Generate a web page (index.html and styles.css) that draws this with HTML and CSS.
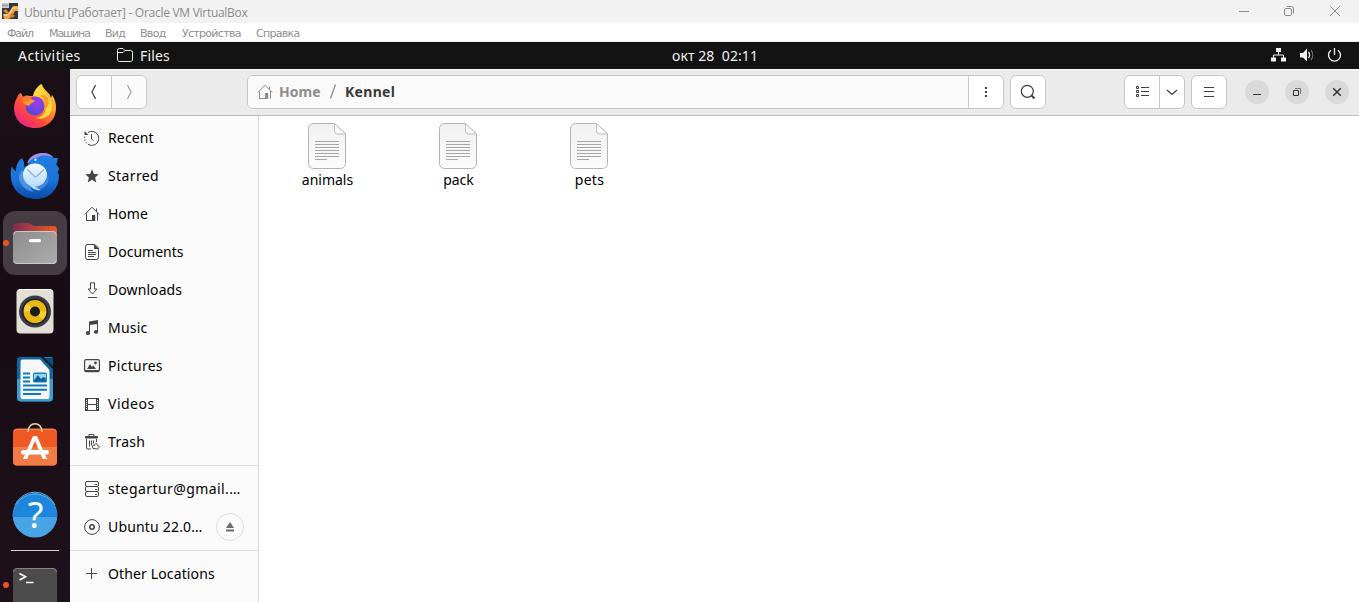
FILE: index.html
```html
<!DOCTYPE html>
<html lang="ru">
<head>
<meta charset="utf-8">
<title>Ubuntu [Работает] - Oracle VM VirtualBox</title>
<link rel="stylesheet" href="styles.css">
</head>
<body>
<svg class="defs" width="0" height="0">
  <defs>
    <linearGradient id="ffBody" x1="1" y1="0" x2=".2" y2="1"><stop offset="0" stop-color="#fff04a"/><stop offset=".4" stop-color="#ff9a2a"/><stop offset=".7" stop-color="#ff4a3c"/><stop offset="1" stop-color="#e8208a"/></linearGradient>
    <radialGradient id="ffCore" cx=".6" cy=".3" r=".8"><stop offset="0" stop-color="#a03cf0"/><stop offset="1" stop-color="#4a4ad0"/></radialGradient>
    <linearGradient id="ffHead" x1="0" y1="0" x2="1" y2="1"><stop offset="0" stop-color="#ff5a30"/><stop offset="1" stop-color="#ffb52e"/></linearGradient>
    <linearGradient id="tb" x1="0" y1="0" x2="0" y2="1"><stop offset="0" stop-color="#2080e0"/><stop offset=".6" stop-color="#1a72d8"/><stop offset="1" stop-color="#0c4aa4"/></linearGradient>
    <linearGradient id="tbMail" x1="0" y1="0" x2="0" y2="1"><stop offset="0" stop-color="#f4faff"/><stop offset="1" stop-color="#b4dcfc"/></linearGradient>
    <linearGradient id="flBack" x1="0" y1="0" x2="1" y2="0"><stop offset="0" stop-color="#7c2b56"/><stop offset="1" stop-color="#f05a24"/></linearGradient>
    <linearGradient id="flFront" x1="0" y1="0" x2="1" y2="1"><stop offset="0" stop-color="#8c8c8c"/><stop offset="1" stop-color="#adadad"/></linearGradient>
    <linearGradient id="paper" x1="0" y1="0" x2="0" y2="1"><stop offset="0" stop-color="#f1f1f1"/><stop offset="1" stop-color="#fbfbfb"/></linearGradient>
    <symbol id="home" viewBox="0 0 16 16"><path d="M.8 8.500 8 1.200l7.200 7.300M2.500 7.500v7h3M13.500 7v7.500H13M12.500 2.500v3" fill="none" stroke="currentColor"/><path d="M2.500 14.500h8" stroke="currentColor"/><path d="M8 9h3.200v6H8z" fill="currentColor"/></symbol>
    <symbol id="file" viewBox="0 0 38 46"><path d="M5.500.5h21L37.500 11v29.500a5 5 0 0 1-5 5h-27a5 5 0 0 1-5-5v-35a5 5 0 0 1 5-5z" fill="url(#paper)" stroke="#b4b4b4"/><path d="M26.500.5V8a3 3 0 0 0 3 3h8z" fill="#fafafa" stroke="#bdbdbd"/><path d="M7 18.500h24M7 21.500h24M7 24.500h24M7 27.500h24M7 30.500h24M7 33.500h24M7 36.500h12" stroke="#a6a6a6"/></symbol>
  </defs>
</svg>

<header class="vm-title">
  <svg class="vm-logo" width="16" height="16" viewBox="0 0 16 16"><rect width="16" height="16" fill="#343843"/><path d="M1 11h4l2 1 2-5 2-4h5v5h-3l-3 5-3 3H2z" fill="#f0a040"/><path d="M2 12h4l5-7h4" stroke="#ffd590" stroke-width="1.500" fill="none"/><path d="M4 6l3 4-2 1-4-3z" fill="#e8862c"/><path d="M10 10l3 3-3 2-2-2z" fill="#e07a20"/><path d="M0 0h7v5H0z" fill="#c9ced5"/><path d="M1 1.500v2M3 1.500v2M5 1.500v2" stroke="#687080"/></svg>
  <span class="vm-name">Ubuntu [Работает] - Oracle VM VirtualBox</span>
  <svg class="vm-controls" width="110" height="20" viewBox="0 0 110 20" fill="none" stroke="#8c8c8c"><path d="M4 10.500h10"/><rect x="49.500" y="7.500" width="7" height="7" rx="1.500"/><path d="M51.500 5.500h5a2 2 0 0 1 2 2v5"/><path d="M95 5l10 10M105 5 95 15"/></svg>
</header>
<nav class="vm-menu">
  <span class="m1">Файл</span><span class="m2">Машина</span><span class="m3">Вид</span><span class="m4">Ввод</span><span class="m5">Устройства</span><span class="m6">Справка</span>
</nav>

<div class="topbar">
  <span class="activities">Activities</span>
  <svg class="tb-folder" width="16" height="14" viewBox="0 0 16 14" fill="none" stroke="#eee"><path d="M.5 11V2.500A2 2 0 0 1 2.500.5H6L8 2.500h5.500a2 2 0 0 1 2 2V11a2 2 0 0 1-2 2.500h-11a2 2 0 0 1-2-2.500zM.5 4.500H6l2-2"/></svg>
  <span class="tb-app">Files</span>
  <span class="clock">окт 28&nbsp; 02:11</span>
  <svg class="tray" width="72" height="16" viewBox="0 0 72 16"><path d="M5 0h5v4H5zM0 9.500h5v4H0zM10 9.500h5v4h-5z" fill="#f2f2f2"/><path d="M7.500 4v3M2.500 10V7h10v3" fill="none" stroke="#f2f2f2"/><path d="M29 5h3l4-4.500v13L32 9.500h-3z" fill="#f2f2f2"/><path d="M37.500 4a5 5 0 0 1 0 6" fill="none" stroke="#f2f2f2" stroke-width="1.300"/><path d="M40 2a8 8 0 0 1 0 10" fill="none" stroke="#777" stroke-width="1.200"/><path d="M60 2.300a6 6 0 1 0 7 0M63.500 0v7" fill="none" stroke="#f2f2f2" stroke-width="1.300"/></svg>
</div>

<main class="desktop">
  <aside class="dock">
    <svg class="tile" viewBox="0 0 64 64"><path d="M32 53C19 53 11 44 11 33c0-5 2-9 4-12 0-1 2-3 3-3l2 4c2-1 4-2 6-1h4c1-5 4-9 9-12 1 5 5 7 8 11l1 3 1-3c3 4 4 8 4 13 0 12-9 20-21 20z" fill="url(#ffBody)"/><path d="M38 9c-4 3-7 7-8 12 6 0 12 3 13 9 1 7-4 13-11 13 9 3 18-3 17-13-1-9-9-11-11-21z" fill="#ffd83c"/><circle cx="32" cy="31" r="9.500" fill="url(#ffCore)"/><path d="M17 23c5-3 9-1 13 2 2 0 2 1 1 2-3 1-4 2-5 4-4-1-7-3-9-8z" fill="url(#ffHead)"/><path d="M36 21c7 1 8 9 5 14 4-2 6-8 4-12-2-3-5-4-9-2z" fill="#ff9d2a"/></svg>
    <svg class="tile" viewBox="0 0 64 64"><path d="M9 23c1 3 2 4 4 5 0-6 2-10 6-13 1 3 3 4 2 9l4-2C26 15 32 10 40 10c6 0 9 3 11 5h4c-1 3 0 4-2 6 2 2 3 4 3 6-2 1-1 3 0 5 0 14-9 24-23 24C19 56 9 47 8 35c-1-5 0-9 1-12z" fill="url(#tb)"/><path d="M24 20.500c2-6.500 8-10.500 16-10.500 5 0 8 2 10 4-6-2-11-2-15 0l-3 3c-3 0-5 2-8 3.500z" fill="#a58fe8"/><path d="M25 20c3-4 6-5 10-5 5 0 8 4 8 9l-9-3z" fill="#1f7ce0"/><path d="M19 27c-3 4-4 8-2 12 3 6 8 9 14 10-3-2-4-4-3-6z" fill="#5c9cec" opacity=".8"/><ellipse cx="32" cy="32" rx="12" ry="11.500" fill="url(#tbMail)"/><path d="M24.500 26.500 31 33q1.500 1.500 3 0l7-6.500" fill="none" stroke="#8fabc8" stroke-width="1.200"/><path d="M26 41c3 5 7 7 12 6-3-1-5-3-5-5z" fill="#b9dcfb"/><path d="M40 41c4-2 6-7 4-12 3 5 2 12-4 16-4 2-8 0-8-2 3 1 6 0 8-2z" fill="#6f9fe8" opacity=".6"/><circle cx="32.500" cy="16.700" r="1.200" fill="#dcecff"/></svg>
    <div class="tile active"><span class="run-dot"></span><svg width="64" height="64" viewBox="0 0 64 64"><path d="M10 40V16a4 4 0 0 1 4-4h11c3 0 4 3 7 3h18a4 4 0 0 1 4 4v21z" fill="url(#flBack)"/><rect x="10" y="20" width="44" height="33" rx="4" fill="url(#flFront)"/><path d="M11 23.500a3 3 0 0 1 3-3h36a3 3 0 0 1 3 3M11 50a3 3 0 0 0 3 2.500h36a3 3 0 0 0 3-2.500" fill="none" stroke="#c9c9c9"/><rect x="26" y="28" width="12" height="3.200" rx="1.500" fill="#fff"/></svg></div>
    <svg class="tile" viewBox="0 0 64 64"><rect x="13.500" y="10" width="37" height="44.500" rx="4" fill="#e3dfd6"/><path d="M15 12a3 3 0 0 1 3-1.500h28a3 3 0 0 1 3 1.500" fill="none" stroke="#fff"/><circle cx="32" cy="32.500" r="16" fill="#3a3d48"/><circle cx="32" cy="32.500" r="13" fill="#1c1c22"/><circle cx="32" cy="32.500" r="11.500" fill="#e9b716"/><path d="M21 32.500a11.500 11.500 0 0 1 3-8l8 8zM43 32.500a11.500 11.500 0 0 1-3 8l-8-8z" fill="#f4cf3c"/><circle cx="32" cy="32.500" r="5" fill="#1b1b1b"/></svg>
    <svg class="tile" viewBox="0 0 64 64"><path d="M18 10h20l12 12v28.500a4 4 0 0 1-4 4H18a4 4 0 0 1-4-4V14a4 4 0 0 1 4-4z" fill="#0969a2"/><path d="M14 32h36v18.500a4 4 0 0 1-4 4H18a4 4 0 0 1-4-4z" fill="#3c9bd0"/><path d="M40.500 10H49a1 1 0 0 1 1 1v8.500z" fill="#07527e"/><path d="M41 10.500h8" stroke="#1683c2"/><path d="M19.500 12.500H37L46.500 23v27a2 2 0 0 1-2 2h-25a2 2 0 0 1-2-2V14.500a2 2 0 0 1 2-2z" fill="#f7f7f7"/><path d="M20 26.500h7M20 30.500h7M20 34.500h7M20 38.500h24M20 42.700h24M20 46.900h18" stroke="#0b7abb" stroke-width="2"/><rect x="30" y="25.500" width="14" height="10" rx="1.500" fill="#1683c2"/><path d="M31 34l4-5 3 3 2-2 3 4v.500H31z" fill="#0a5c94"/><path d="M31 27h12v4l-3-1-2 2-3-4-4 5z" fill="#9ad3ee"/></svg>
    <svg class="tile" viewBox="0 0 64 64"><rect x="10" y="13.700" width="44" height="36.800" rx="4" fill="#ef5a24"/><path d="M10 32h44v14.500a4 4 0 0 1-4 4H14a4 4 0 0 1-4-4z" fill="#f27c47"/><path d="M11 16.500a3 3 0 0 1 3-2.300h36a3 3 0 0 1 3 2.300" fill="none" stroke="#fa8d60"/><path d="M25 17c0-11 14-11 14 0" fill="none" stroke="#ead9a8" stroke-width="1.600"/><path d="M20 44l10-23h4l10 23h-4.200L32 26l-7.800 18z" fill="#fff"/><rect x="18" y="35" width="28" height="4.500" rx="2.200" fill="#fff"/></svg>
    <svg class="tile" viewBox="0 0 64 64"><circle cx="32" cy="32.300" r="22.300" fill="#49a4e6"/><path d="M9.700 34a22.300 22.300 0 0 1 44.600 0z" fill="#1c87dc"/><path d="M12 22a22 22 0 0 1 40 0" fill="none" stroke="#58b0ee"/><text x="32.500" y="45.300" text-anchor="middle" class="help-mark">?</text></svg>
    <div class="dock-line"></div>
    <div class="tile"><span class="run-dot"></span><svg width="64" height="64" viewBox="0 0 64 64"><rect x="10" y="15" width="44" height="45" rx="4" fill="#4c4c4c"/><path d="M10.500 19a3.500 3.500 0 0 1 3.500-3.500h36a3.500 3.500 0 0 1 3.500 3.500" fill="none" stroke="#858585"/><path d="M16.500 20.500l6 3.300-6 3.300" fill="none" stroke="#fff" stroke-width="1.700"/><path d="M23 29.500h7.500" stroke="#fff" stroke-width="1.500"/></svg></div>
  </aside>

  <section class="window">
    <div class="headerbar">
      <div class="group nav">
        <span class="cell"><svg width="16" height="16" viewBox="0 0 16 16" fill="none" stroke="#3d3d3d" stroke-width="1.200"><path d="M9.500 1 6 8l3.500 7"/></svg></span>
        <span class="cell off"><svg width="16" height="16" viewBox="0 0 16 16" fill="none" stroke="#9a9a9a" stroke-width="1.100"><path d="M6.500 1 10 8l-3.500 7"/></svg></span>
      </div>
      <div class="group path">
        <div class="crumbs"><svg width="16" height="16"><use href="#home"/></svg><b class="c-home">Home</b><svg class="slash" width="6" height="15" viewBox="0 0 6 15"><path d="M.5 14.500 5.500.5" stroke="#8d8d8d" stroke-width="1.300"/></svg><b class="c-now">Kennel</b></div>
        <span class="cell"><svg width="16" height="16" viewBox="0 0 16 16" fill="#3d3d3d"><path d="M7 3h2v2H7zM7 7h2v2H7zM7 11h2v2H7z"/></svg></span>
      </div>
      <div class="group search"><span class="cell"><svg width="16" height="16" viewBox="0 0 16 16" fill="none" stroke="#3d3d3d" stroke-width="1.200"><circle cx="7.300" cy="7.300" r="6"/><path d="M11.500 11.500l3 3" stroke-width="2"/></svg></span></div>
      <div class="group view">
        <span class="cell"><svg width="14" height="12" viewBox="0 0 14 12" fill="none" stroke="#3d3d3d"><path d="M1.500.5h2v2h-2zM1.500 4.500h2v2h-2zM1.500 8.500h2v2h-2zM6 1.500h8M6 5.500h8M6 9.500h8"/></svg></span>
        <span class="cell narrow"><svg width="12" height="8" viewBox="0 0 12 8" fill="none" stroke="#3d3d3d" stroke-width="1.200"><path d="M1 2l5 4.500L11 2"/></svg></span>
      </div>
      <div class="group menu"><span class="cell"><svg width="10" height="10" viewBox="0 0 10 10" stroke="#3d3d3d"><path d="M0 .5h10M0 4.500h10M0 9.500h10"/></svg></span></div>
      <div class="win-buttons">
        <span><svg width="10" height="10" viewBox="0 0 10 10" stroke="#333"><path d="M1 7.500h8"/></svg></span>
        <span><svg width="10" height="10" viewBox="0 0 10 10" fill="none" stroke="#333"><path d="M1.500 3.500h5v5h-5z"/><path d="M3 1.500h5.500V7" stroke="#777"/></svg></span>
        <span><svg width="10" height="10" viewBox="0 0 10 10" stroke="#333" stroke-width="1.500"><path d="M1.200 1.200l7.600 7.600M8.800 1.200 1.200 8.800"/></svg></span>
      </div>
    </div>

    <div class="body">
      <ul class="places">
        <li><svg width="16" height="16" viewBox="0 0 16 16" fill="none" stroke="currentColor"><path d="M4 2.500A7 7 0 1 1 4 14.300"/><path d="M.8 6.500A7 7 0 0 0 4 14.300" stroke-dasharray="1.500 1.500"/><path d="M7.500 4v5l2 1.500"/><path d="M.5 1v4h4z" fill="currentColor" stroke="none"/></svg><span class="t-recent">Recent</span></li>
        <li><svg width="16" height="16" viewBox="0 0 16 16"><path d="M8 1.300l1.900 4.600 4.900.4-3.700 3.200 1.100 4.900L8 11.800l-4.200 2.600 1.100-4.900L1.200 6.300l4.900-.4z" fill="currentColor"/></svg><span class="t-starred">Starred</span></li>
        <li><svg width="16" height="16"><use href="#home"/></svg><span class="t-home">Home</span></li>
        <li><svg width="16" height="16" viewBox="0 0 16 16" fill="none" stroke="currentColor"><path d="M3.500.5H11l3.500 3.500v9.500a2 2 0 0 1-2 2h-9a2 2 0 0 1-2-2v-11a2 2 0 0 1 2-2zM4 6.500h5M4 8.500h8M4 10.500h8M4 12.500h6"/><path d="M10 0l5 5h-5z" fill="currentColor" stroke="none"/></svg><span class="t-documents">Documents</span></li>
        <li><svg width="16" height="16" viewBox="0 0 16 16" fill="none" stroke="currentColor"><path d="M6.500.8h4V7h2.300L8.500 12 4.200 7h2.300zM4 15.500h9"/></svg><span class="t-downloads">Downloads</span></li>
        <li><svg width="16" height="16" viewBox="0 0 16 16"><path d="M5 1.500 14 0v11.500h-1V4L6 5v8H5z" fill="currentColor"/><ellipse cx="4" cy="13" rx="2.200" ry="1.900" fill="currentColor"/><ellipse cx="12" cy="11.800" rx="2.200" ry="1.900" fill="currentColor"/></svg><span class="t-music">Music</span></li>
        <li><svg width="16" height="16" viewBox="0 0 16 16"><rect x=".6" y="1.600" width="14.800" height="12" rx="1.500" fill="none" stroke="currentColor" stroke-width="1.200"/><path d="M1 12h14v2H1zM3 11l3-5 2 3 1.500-1.500L12 11z" fill="currentColor"/><circle cx="11.500" cy="5" r="1.400" fill="currentColor"/></svg><span class="t-pictures">Pictures</span></li>
        <li><svg width="16" height="16" viewBox="0 0 16 16" fill="none" stroke="currentColor"><path d="M1 2.500h14M1 14.500h14M3.500 2v13M12.500 2v13M4 8.500h9"/><path d="M1.500 2v13M14.500 2v13"/><path d="M2.500 3v12M13.500 3v12" stroke-dasharray="1 1"/></svg><span class="t-videos">Videos</span></li>
        <li><svg width="16" height="16" viewBox="0 0 16 16" fill="none" stroke="currentColor"><path d="M1.500 2.500h12v1.500h-12z" fill="currentColor"/><path d="M5 2V.5h5V2M2.500 5v9a1 1 0 0 0 1 1H7M12.500 5v3M5.500 6.500v6M7.500 6.500v5M9.500 6.500v3M9 14.500c-1.500-3 .5-4 1.500-3 0-2.500 3-2.500 3 0 2 0 2 3 0 3.500z"/></svg><span class="t-trash">Trash</span></li>
        <li class="line"></li>
        <li><svg width="16" height="16" viewBox="0 0 16 16" fill="none" stroke="currentColor"><rect x="1.500" y=".5" width="13" height="5" rx="1.500"/><rect x="1.500" y="5.500" width="13" height="5" rx="1.500"/><rect x="1.500" y="10.500" width="13" height="5" rx="1.500"/><path d="M11 3.500h2M11 8.500h2M11 13.500h2"/></svg><span class="t-mail">stegartur@gmail.…</span></li>
        <li><svg width="16" height="16" viewBox="0 0 16 16" fill="none" stroke="currentColor"><circle cx="8" cy="8" r="7.400"/><circle cx="8" cy="8" r="2.200" stroke-width="1.600"/></svg><span class="t-ubuntu">Ubuntu 22.0…</span><i class="eject"><svg width="8" height="10" viewBox="0 0 8 10" fill="#6b6b6b"><path d="M4 0l4 6H0zM0 7.500h8v2H0z"/></svg></i></li>
        <li class="line"></li>
        <li><svg width="16" height="16" viewBox="0 0 16 16" stroke="currentColor"><path d="M2 7.500h11M7.500 2v11"/></svg><span class="t-other">Other Locations</span></li>
      </ul>
      <div class="files">
        <figure><svg width="38" height="46"><use href="#file"/></svg><figcaption class="t-animals">animals</figcaption></figure>
        <figure><svg width="38" height="46"><use href="#file"/></svg><figcaption class="t-pack">pack</figcaption></figure>
        <figure><svg width="38" height="46"><use href="#file"/></svg><figcaption class="t-pets">pets</figcaption></figure>
      </div>
    </div>
  </section>
</main>
</body>
</html>
```
FILE: styles.css
```css
* { box-sizing: border-box; }
body { margin: 0; width: 1359px; height: 602px; overflow: hidden; display: flex; flex-direction: column; background: #fff; font-family: "Noto Sans", sans-serif; font-size: 14px; color: #000; white-space: nowrap; }
svg { display: block; flex: none; }
.defs { position: absolute; }
ul, figure { margin: 0; padding: 0; list-style: none; }

.vm-title { height: 23px; flex: none; display: flex; align-items: center; background: #f2f2f2; padding: 0 14px 0 2px; }
.vm-logo { margin-top: -1px; }
.vm-name { margin: 1px 0 0 6px; font: 12px "Open Sans", sans-serif; color: #8a8a8a; letter-spacing: -.28px; }
.vm-controls { margin: -2px 0 0 auto; }
.vm-menu { height: 19px; flex: none; display: flex; align-items: center; padding: 2px 0 0 7px; font: 11px "DejaVu Sans", sans-serif; color: #8f8f8f; border-bottom: 1px solid #ececec; letter-spacing: -.7px; }
.m1 { width: 42px; letter-spacing: -1.1px; }
.m2 { width: 56px; letter-spacing: -1.1px; }
.m3 { width: 35px; }
.m4 { width: 42px; }
.m5 { width: 74px; }

.topbar { height: 27px; flex: none; display: grid; grid-template-columns: 99px 23px 532px 1fr 72px; align-items: center; padding: 0 16px 0 18px; background: #131313; color: #f2f2f2; }
.activities { letter-spacing: .43px; }
.tb-folder { margin-top: -1px; }
.tb-app { letter-spacing: .15px; }
.clock { letter-spacing: .08px; }

.desktop { flex: 1; min-height: 0; display: flex; }
.dock { width: 70px; height: 533px; overflow: hidden; flex: none; padding: 6px 3px 0; display: flex; flex-direction: column; gap: 4px; background: linear-gradient(#1a0f17, #180d14 50%, #1f111b); }
.tile { width: 64px; height: 64px; flex: none; position: relative; }
.active { background: #463c43; border-radius: 12px; }
.run-dot { position: absolute; left: 0; top: 29px; width: 6px; height: 6px; border-radius: 50%; background: #e95420; }
.dock-line { width: 48px; height: 1px; flex: none; margin: -1px 8px -2px; background: #d4d1d3; }
.help-mark { font: 36px "Noto Sans", sans-serif; fill: #fff; }

.window { flex: 1; min-width: 0; display: flex; flex-direction: column; }
.headerbar { height: 47px; flex: none; display: flex; align-items: center; padding: 0 10px 2px 6px; background: #ebebeb; border-top: 1px solid #fafafa; border-bottom: 1px solid #bdbdbd; }
.group { height: 34px; display: flex; border: 1px solid #c6c6c6; border-radius: 6px; background: #fff; overflow: hidden; }
.cell { flex: 1; display: flex; align-items: center; justify-content: center; }
.cell + .cell, .crumbs + .cell { border-left: 1px solid #c6c6c6; }
.off { background: #fafafa; }
.nav { width: 71px; }
.path { width: 757px; margin-left: 100px; }
.crumbs { width: 720px; display: flex; align-items: center; padding-left: 9px; background: #fafafa; color: #8d8d8d; }
.c-home { margin-left: 6px; width: 51px; letter-spacing: .05px; }
.c-now { margin-left: 9px; color: #3a3a3a; letter-spacing: .3px; }
.search { width: 36px; margin-left: 6px; }
.view { width: 61px; margin-left: 78px; }
.narrow { flex: 0 0 25px; }
.menu { width: 36px; margin-left: 6px; }
.win-buttons { display: flex; gap: 16px; margin-left: 18px; }
.win-buttons span { width: 24px; height: 24px; border-radius: 50%; background: #d9d9d9; display: flex; align-items: center; justify-content: center; }

.body { flex: 1; min-height: 0; display: flex; }
.places { width: 189px; flex: none; background: #fafafa; border-right: 1px solid #dadada; padding-top: 3px; }
.places li { height: 38px; display: flex; align-items: center; padding: 0 14px; }
.places li > svg { color: #454545; margin-right: 8px; }
.places li > span { padding-bottom: 2px; }
.places .line { height: 1px; margin: 4px 0; padding: 0; background: #dcdcdc; }
.t-recent { letter-spacing: .15px; }
.t-starred { letter-spacing: .38px; }
.t-downloads { letter-spacing: .08px; }
.t-music { letter-spacing: .2px; }
.t-pictures { letter-spacing: .28px; }
.t-videos { letter-spacing: .5px; }
.t-trash { letter-spacing: .3px; }
.t-mail { letter-spacing: .42px; }
.t-ubuntu { letter-spacing: .18px; }
.t-other { letter-spacing: .13px; }
.eject { width: 28px; height: 28px; margin-left: auto; border: 1px solid #dedede; border-radius: 50%; display: flex; align-items: center; justify-content: center; }
.files { flex: 1; display: flex; padding: 7px 0 0 2px; background: #fff; }
.files figure { width: 131px; display: flex; flex-direction: column; align-items: center; }
.files figcaption { line-height: 19px; margin-top: 1px; padding-left: 2px; }
.t-pets { letter-spacing: .3px; }
```
